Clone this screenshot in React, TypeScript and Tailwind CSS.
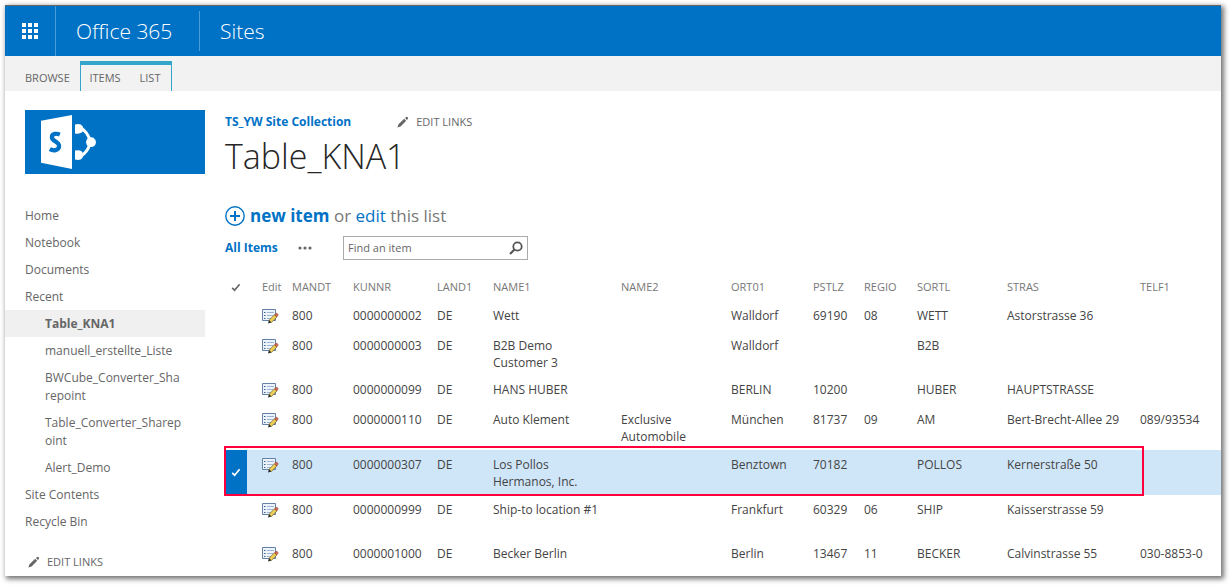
import React from "react";

const columns = ["MANDT", "KUNNR", "LAND1", "NAME1", "NAME2", "ORT01", "PSTLZ", "REGIO", "SORTL", "STRAS", "TELF1"];

type Row = { cells: string[]; height: string; selected?: boolean };

const rows: Row[] = [
  { height: "h-[30px]", cells: ["800", "0000000002", "DE", "Wett", "", "Walldorf", "69190", "08", "WETT", "Astorstrasse 36", ""] },
  { height: "h-[44px]", cells: ["800", "0000000003", "DE", "B2B Demo\nCustomer 3", "", "Walldorf", "", "", "B2B", "", ""] },
  { height: "h-[30px]", cells: ["800", "0000000099", "DE", "HANS HUBER", "", "BERLIN", "10200", "", "HUBER", "HAUPTSTRASSE", ""] },
  { height: "h-[45px]", cells: ["800", "0000000110", "DE", "Auto Klement", "Exclusive\nAutomobile", "München", "81737", "09", "AM", "Bert-Brecht-Allee 29", "089/93534"] },
  { height: "h-[45px]", selected: true, cells: ["800", "0000000307", "DE", "Los Pollos\nHermanos, Inc.", "", "Benztown", "70182", "", "POLLOS", "Kernerstraße 50", ""] },
  { height: "h-[44px]", cells: ["800", "0000000999", "DE", "Ship-to location #1", "", "Frankfurt", "60329", "06", "SHIP", "Kaisserstrasse 59", ""] },
  { height: "h-[37px]", cells: ["800", "0000001000", "DE", "Becker Berlin", "", "Berlin", "13467", "11", "BECKER", "Calvinstrasse 55", "030-8853-0"] },
];

const recent = ["manuell_erstellte_Liste", "BWCube_Converter_Sharepoint", "Table_Converter_Sharepoint", "Alert_Demo"];

function Waffle() {
  return (
    <svg width="16" height="16" viewBox="0 0 16 16" fill="#fff" aria-hidden="true">
      {[0, 6, 12].map((y) => [0, 6, 12].map((x) => <rect key={`${x}-${y}`} x={x} y={y} width="4" height="4" />))}
    </svg>
  );
}

function Pencil() {
  return (
    <svg width="12" height="12" viewBox="0 0 12 12" fill="#666" aria-hidden="true">
      <path d="M.4 11.600 1.500 8.300 7.200 2.800 9.200 4.800 3.600 10.500ZM8 2 9.200.9Q9.900.4 10.700 1.200 11.500 2.100 11 2.800L9.900 3.900Z" />
    </svg>
  );
}

function Check({ color }: { color: string }) {
  return (
    <svg width="10" height="9" viewBox="0 0 10 9" fill="none" stroke={color} strokeWidth="1.700" aria-hidden="true">
      <path d="M1.200 4.800 3.600 7.200 8.600 1.200" />
    </svg>
  );
}

function SharePointLogo() {
  return (
    <svg width="56" height="56" viewBox="0 0 56 56" aria-label="SharePoint" role="img">
      <path fill="#fff" d="M0 6.700 31 1V55L0 48.800Z" />
      <path fill="none" stroke="#0072c6" strokeWidth="4.200" d="M18.800 20.600C16 19.300 10.900 19.200 10.900 23.200C10.900 27.800 18.100 27 18.100 32C18.100 36.800 12 37 8.800 35.200" />
      <g fill="#fff">
        <path d="M34 10.500Q39.500 9 41.500 12.200 43.500 16 40.800 18.600 38 20.400 34 19.400Z" />
        <path d="M34 36.600Q38 35.400 40.800 37.400 43.500 40 41.500 43.800 39.500 47 34 45.500Z" />
        <circle cx="50" cy="28.200" r="4.900" />
      </g>
      <path fill="none" stroke="#fff" strokeWidth="3" d="M40 14Q46.500 18 48.800 26M48.800 30.400Q46.500 38 40 42" />
    </svg>
  );
}

function EditIcon() {
  return (
    <svg width="17" height="16" viewBox="0 0 17 16" aria-hidden="true">
      <path fill="#edf3fb" stroke="#6482a6" d="M.5 1.500h13v11h-13z" />
      <path stroke="#41608c" d="M2 4.500h1.500M2 7.500h1.500M2 10.500h1.500" />
      <path stroke="#9fb4cf" d="M5 4.500h7M5 7.500h6M5 10.500h4" />
      <path fill="#f0cf55" stroke="#6d5a22" strokeWidth=".7" d="m7 12.300 5.600-5.600 2.300 2.300-5.600 5.600Z" />
      <path fill="#d66b55" stroke="#8b3d32" strokeWidth=".6" d="m12.600 6.700 1.200-1.200q1-.5 1.700.3.800.9.300 1.800L14.700 9Z" />
      <path fill="#222" d="m7 12.300 2.300 2.300L6 15.600Z" />
    </svg>
  );
}

const navLink = "block px-5 pt-[5px] pb-1 leading-[18px] hover:underline";

export default function App() {
  return (
    <div className="bg-white pt-[5px] pr-[9px] pb-[9px] pl-[5px] font-['Open_Sans','Noto_Sans',sans-serif] text-xs text-[#444]">
      <div className="overflow-hidden border-t border-[#666] bg-white shadow-[2px_2px_5px_1px_rgba(0,0,0,0.55)]">
        <header className="flex h-[50px] items-center bg-[#0072c6] text-white">
          <button aria-label="App launcher" className="flex h-full w-[51px] items-center justify-center border-r border-[#4c9cd8]">
            <Waffle />
          </button>
          <a href="#office" className="flex h-10 w-36 items-center border-r border-[#4c9cd8] pl-5 text-[21px] font-light">Office 365</a>
          <a href="#sites" className="pl-5 text-[21px] font-light">Sites</a>
        </header>

        <nav aria-label="Ribbon" className="flex h-[35px] items-end bg-[#f2f2f2] pl-5 text-[11px] text-[#666]">
          <button className="h-[26px] w-[55px] text-left">BROWSE</button>
          <div className="flex h-[30px] border-x border-t-4 border-[#35a6cb]">
            <button className="w-12">ITEMS</button>
            <button className="w-[42px]">LIST</button>
          </div>
        </nav>

        <div className="flex">
          <aside className="w-[200px] shrink-0 pt-[19px] text-[#666]">
            <a href="#home" className="ml-5 flex h-16 items-center bg-[#0072c6] pl-4">
              <SharePointLogo />
            </a>
            <nav aria-label="Site" className="pt-7">
              <a href="#home" className={navLink}>Home</a>
              <a href="#notebook" className={navLink}>Notebook</a>
              <a href="#documents" className={navLink}>Documents</a>
              <a href="#recent" className={navLink}>Recent</a>
              <a href="#kna1" className="block bg-[#f0f0f0] pt-[5px] pr-[22px] pb-1 pl-10 leading-[18px] font-bold">Table_KNA1</a>
              {recent.map((r) => (
                <a key={r} href={`#${r}`} className="block pt-[5px] pr-[22px] pb-1 pl-10 leading-[18px] break-all hover:underline">{r}</a>
              ))}
              <a href="#contents" className={navLink}>Site Contents</a>
              <a href="#recycle" className={navLink}>Recycle Bin</a>
            </nav>
            <button className="mt-[18px] ml-[23px] flex items-center gap-[7px] text-[11px] leading-[18px]">
              <Pencil /> EDIT LINKS
            </button>
          </aside>

          <main className="min-w-0 flex-1 pt-[21px] pl-5">
            <div className="flex items-center gap-[46px] leading-5">
              <a href="#collection" className="font-bold text-[#0072c6]">TS_YW Site Collection</a>
              <button className="flex items-center gap-[7px] text-[11px] text-[#666]">
                <Pencil /> EDIT LINKS
              </button>
            </div>
            <h1 className="text-[34px] leading-[48px] font-light text-[#262626]">Table_KNA1</h1>
            <div className="mt-[22px] flex items-center gap-[5px] text-[17px] leading-7 text-[#777]">
              <svg width="20" height="20" viewBox="0 0 20 20" fill="none" stroke="#0072c6" aria-hidden="true">
                <circle cx="10" cy="10" r="9.200" strokeWidth="1.400" />
                <path strokeWidth="2" d="M5 10h10M10 5v10" />
              </svg>
              <p>
                <a href="#new" className="font-bold text-[#0072c6]">new item</a> or <a href="#edit" className="text-[#0072c6]">edit</a> this list
              </p>
            </div>
            <div className="mt-[6px] flex h-6 items-center">
              <a href="#all" className="w-[73px] font-bold text-[#0072c6]">All Items</a>
              <button aria-label="More views" className="w-[45px]">
                <svg width="14" height="4" viewBox="0 0 14 4" fill="#666" aria-hidden="true">
                  <circle cx="2" cy="2" r="1.600" /><circle cx="7" cy="2" r="1.600" /><circle cx="12" cy="2" r="1.600" />
                </svg>
              </button>
              <form className="flex h-6 w-[185px] items-center border border-[#ababab] pr-1 pl-1">
                <input aria-label="Find an item" placeholder="Find an item" className="min-w-0 flex-1 text-[11px] outline-none placeholder:text-[#666]" />
                <button type="button" aria-label="Search">
                  <svg width="14" height="14" viewBox="0 0 14 14" fill="none" stroke="#555" strokeWidth="1.800" aria-hidden="true">
                    <circle cx="8.500" cy="5.500" r="4.200" />
                    <path strokeWidth="2.200" d="M5.500 8.500 1 13" />
                  </svg>
                </button>
              </form>
            </div>

            <table className="mt-[14px] w-full table-fixed border-collapse text-left">
              <colgroup>
                <col className="w-[22px]" />
                <col className="w-[45px]" />
                <col className="w-[61px]" />
                <col className="w-[84px]" />
                <col className="w-[56px]" />
                <col className="w-[128px]" />
                <col className="w-[110px]" />
                <col className="w-[82px]" />
                <col className="w-[51px]" />
                <col className="w-[53px]" />
                <col className="w-[90px]" />
                <col className="w-[133px]" />
                <col />
              </colgroup>
              <thead>
                <tr className="h-[27px] text-[11px] text-[#777]">
                  <th className="font-normal"><div className="flex justify-center"><Check color="#666" /></div></th>
                  <th className="pl-[15px] font-normal">Edit</th>
                  {columns.map((c) => <th key={c} className="font-normal">{c}</th>)}
                </tr>
              </thead>
              <tbody>
                {rows.map((row) => (
                  <tr key={row.cells[1]} className={`${row.height} align-top leading-[17px] ${row.selected ? "bg-[#cfe5f8]" : ""}`}>
                    <td className={row.selected ? "relative bg-[#0072c6] align-middle" : ""}>
                      {row.selected && (
                        <>
                          <div className="flex justify-center"><Check color="#fff" /></div>
                          <div className="pointer-events-none absolute -top-1 -left-px h-[50px] w-[920px] border-2 border-[#ff003c]" />
                        </>
                      )}
                    </td>
                    <td className="pt-[7px] pl-[15px]">
                      <button aria-label="Edit item" className="block"><EditIcon /></button>
                    </td>
                    {row.cells.map((cell, i) => (
                      <td key={i} className="pt-[6px] whitespace-pre">{cell}</td>
                    ))}
                  </tr>
                ))}
              </tbody>
            </table>
          </main>
        </div>
      </div>
    </div>
  );
}
